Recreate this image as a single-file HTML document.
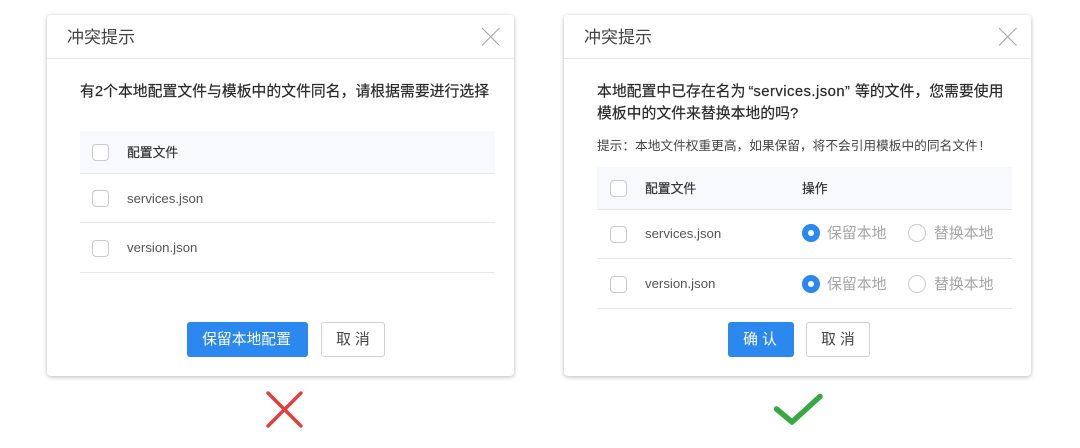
<!DOCTYPE html>
<html lang="zh"><head><meta charset="utf-8"><style>
*{box-sizing:border-box;margin:0;padding:0}
html,body{width:1080px;height:448px;background:#fff;overflow:hidden}
body{position:relative;font-family:"Liberation Sans","Noto Sans CJK SC",sans-serif;color:#333}
.a{position:absolute;white-space:nowrap}
.dlg{position:absolute;top:15px;width:467px;height:361px;background:#fff;border-radius:4px;box-shadow:0 1px 5px rgba(0,0,0,.28)}
.line{position:absolute;height:1px;background:#e6e8eb}
.th{position:absolute;height:43px;background:#f7f9fc;border-bottom:1px solid #e6e8eb}
.cb{position:absolute;width:17px;height:17px;border:1px solid #c9cbcf;border-radius:4px;background:#fff}
.t{position:absolute;white-space:nowrap;font-size:17px;line-height:24px;color:#444}
.q{position:absolute;white-space:nowrap;font-size:14.85px;line-height:22px;color:#2a2a2a;-webkit-text-stroke:.2px #2a2a2a}
.h{position:absolute;white-space:nowrap;font-size:12.8px;line-height:18px;color:#333;-webkit-text-stroke:.2px #333}
.f{position:absolute;white-space:nowrap;font-size:13.2px;line-height:18px;color:#555}
.r{position:absolute;white-space:nowrap;font-size:14.9px;line-height:20px;color:#a6a6a6}
.on{position:absolute;width:18px;height:18px;border-radius:50%;background:#2b88ee}
.on:after{content:"";position:absolute;left:6px;top:6px;width:6px;height:6px;border-radius:50%;background:#fff}
.off{position:absolute;width:18px;height:18px;border-radius:50%;border:1px solid #c9cbcf;background:#fff}
.b{position:absolute;top:322px;height:35px;border-radius:3px;font-size:14.8px;line-height:37px;text-align:center;white-space:nowrap}
.p{background:#2b88ee;color:#fff;padding-right:2px}
.s{background:#fff;color:#444;border:1px solid #cfd1d5;line-height:35px}
.lat{letter-spacing:.45px}
</style></head><body>
<div class="dlg" style="left:47px"></div>
<div class="dlg" style="left:564px"></div>
<div class="line" style="left:47px;top:58px;width:467px"></div>
<div class="line" style="left:564px;top:58px;width:467px"></div>

<div class="t" style="left:67px;top:26px">冲突提示</div>
<svg class="a" style="left:481px;top:27px" width="20" height="20" viewBox="0 0 20 20"><path d="M1 1L18.500 18.500M18.500 1L1 18.500" stroke="#a3a3a3" stroke-width="1" fill="none"/></svg>
<div class="q" style="left:80px;top:81px">有2个本地配置文件与模板中的文件同名&#xFF0C;请根据需要进行选择</div>
<div class="th" style="left:80px;top:131px;width:415px"></div>
<div class="cb" style="left:92px;top:144px"></div>
<div class="h" style="left:127px;top:144px">配置文件</div>
<div class="cb" style="left:92px;top:190px"></div>
<div class="f" style="left:127px;top:190px">services.json</div>
<div class="line" style="left:80px;top:222px;width:415px"></div>
<div class="cb" style="left:92px;top:240px"></div>
<div class="f" style="left:127px;top:239px">version.json</div>
<div class="line" style="left:80px;top:272px;width:415px"></div>
<div class="b p" style="left:187px;width:121px">保留本地配置</div>
<div class="b s" style="left:321px;width:64px">取 消</div>
<svg class="a" style="left:265px;top:390px" width="40" height="40" viewBox="0 0 40 40"><path d="M3 3L36 36M36 3L3 36" stroke="#e53d3b" stroke-width="3.400" fill="none" stroke-linecap="round"/></svg>

<div class="t" style="left:584px;top:26px">冲突提示</div>
<svg class="a" style="left:998px;top:27px" width="20" height="20" viewBox="0 0 20 20"><path d="M1 1L18.500 18.500M18.500 1L1 18.500" stroke="#a3a3a3" stroke-width="1" fill="none"/></svg>
<div class="q" style="left:597px;top:81px">本地配置中已存在名为<span style="margin-left:3px">“</span><span class="lat">services.json</span><span style="margin-right:5px">”</span>等的文件&#xFF0C;您需要使用</div>
<div class="q" style="left:597px;top:103px">模板中的文件来替换本地的吗?</div>
<div class="a" style="left:597px;top:137px;font-size:12.7px;line-height:18px;color:#444">提示&#xFF1A;本地文件权重更高&#xFF0C;如果保留&#xFF0C;将不会引用模板中的同名文件<span style="margin-left:2px">!</span></div>
<div class="th" style="left:597px;top:167px;width:415px"></div>
<div class="cb" style="left:610px;top:180px"></div>
<div class="h" style="left:645px;top:180px">配置文件</div>
<div class="h" style="left:802px;top:180px">操作</div>

<div class="cb" style="left:610px;top:226px"></div>
<div class="f" style="left:645px;top:225px">services.json</div>
<div class="on" style="left:801.500px;top:224px"></div>
<div class="r" style="left:827px;top:224px">保留本地</div>
<div class="off" style="left:908px;top:224px"></div>
<div class="r" style="left:934px;top:224px">替换本地</div>
<div class="line" style="left:597px;top:258px;width:415px"></div>

<div class="cb" style="left:610px;top:276px"></div>
<div class="f" style="left:645px;top:275px">version.json</div>
<div class="on" style="left:801.500px;top:275px"></div>
<div class="r" style="left:827px;top:275px">保留本地</div>
<div class="off" style="left:908px;top:275px"></div>
<div class="r" style="left:934px;top:275px">替换本地</div>
<div class="line" style="left:597px;top:308px;width:415px"></div>

<div class="b p" style="left:728px;width:66px">确 认</div>
<div class="b s" style="left:806px;width:64px">取 消</div>
<svg class="a" style="left:770px;top:390px" width="56" height="40" viewBox="0 0 56 40"><path d="M6.500 19L22 32L50 6.500" stroke="#38a844" stroke-width="5.500" fill="none" stroke-linecap="round" stroke-linejoin="round"/></svg>
</body></html>
